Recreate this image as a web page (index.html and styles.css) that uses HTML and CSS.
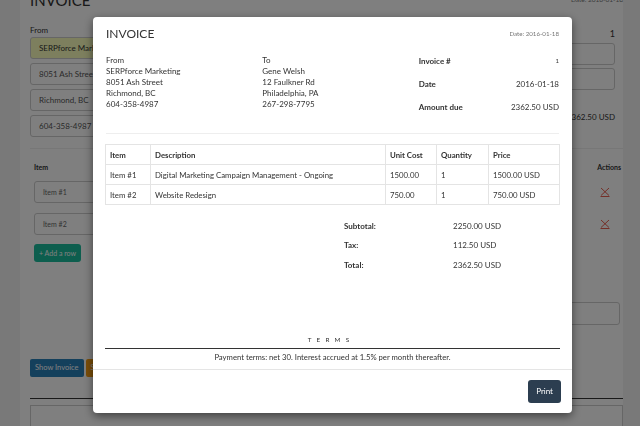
FILE: index.html
```html
<!DOCTYPE html>
<html>
<head>
<meta charset="utf-8">
<link rel="stylesheet" href="styles.css">
</head>
<body>
<div class="page">
  <div class="pg-head">
    <h1 class="pg-title">INVOICE</h1>
    <span class="pg-date">Date: 2016-01-18</span>
  </div>
  <div class="pg-info">
    <div class="pg-from">
      <div class="pg-lbl">From</div>
      <div class="inp autofill">SERPforce Marketing</div>
      <div class="inp">8051 Ash Street</div>
      <div class="inp">Richmond, BC</div>
      <div class="inp">604-358-4987</div>
    </div>
    <div class="pg-meta">
      <div class="pg-num">1</div>
      <div class="inp"></div>
      <div class="inp"></div>
      <div class="pg-amt">2362.50 USD</div>
    </div>
  </div>
  <div class="pg-hr"></div>
  <div class="pg-items">
    <div class="pg-items-head"><span>Item</span><span>Actions</span></div>
    <div class="pg-row">
      <div class="inp item">Item #1</div>
      <svg class="del" viewBox="0 0 10 10" width="10" height="10"><path d="M1 1L9 8.5M9 1L1 8.5M0.5 9.5H9.5" stroke="#e74c3c" stroke-width="0.9" fill="none"/></svg>
    </div>
    <div class="pg-row">
      <div class="inp item">Item #2</div>
      <svg class="del" viewBox="0 0 10 10" width="10" height="10"><path d="M1 1L9 8.5M9 1L1 8.5M0.5 9.5H9.5" stroke="#e74c3c" stroke-width="0.9" fill="none"/></svg>
    </div>
    <div class="btn-add">+ Add a row</div>
  </div>
  <div class="pg-notes"><div class="inp notes"></div></div>
  <div class="pg-actions">
    <div class="btn blue">Show Invoice</div>
    <div class="btn orange">Save Invoice</div>
  </div>
  <div class="pg-hr dark"></div>
  <div class="pg-box"></div>
</div>

<div class="overlay"></div>

<div class="modal">
  <div class="m-head">
    <h2 class="m-title">INVOICE</h2>
    <span class="m-date">Date: 2016-01-18</span>
  </div>
  <div class="m-body">
    <div class="m-info">
      <div class="m-addr">
        <div>From</div>
        <div>SERPforce Marketing</div>
        <div>8051 Ash Street</div>
        <div>Richmond, BC</div>
        <div>604-358-4987</div>
      </div>
      <div class="m-addr">
        <div>To</div>
        <div>Gene Welsh</div>
        <div>12 Faulkner Rd</div>
        <div>Philadelphia, PA</div>
        <div>267-298-7795</div>
      </div>
      <div class="m-meta">
        <div class="m-meta-row"><span class="b">Invoice #</span><span class="tiny">1</span></div>
        <div class="m-meta-row"><span class="b">Date</span><span>2016-01-18</span></div>
        <div class="m-meta-row"><span class="b">Amount due</span><span>2362.50 USD</span></div>
      </div>
    </div>
    <div class="m-hr"></div>
    <table class="m-table">
      <colgroup>
        <col class="c1"><col class="c2"><col class="c3"><col class="c4"><col class="c5">
      </colgroup>
      <thead>
        <tr><th>Item</th><th>Description</th><th>Unit Cost</th><th>Quantity</th><th>Price</th></tr>
      </thead>
      <tbody>
        <tr><td>Item #1</td><td>Digital Marketing Campaign Management - Ongoing</td><td>1500.00</td><td>1</td><td>1500.00 USD</td></tr>
        <tr><td>Item #2</td><td>Website Redesign</td><td>750.00</td><td>1</td><td>750.00 USD</td></tr>
      </tbody>
    </table>
    <div class="m-totals">
      <div class="m-tot-row"><span class="b">Subtotal:</span><span>2250.00 USD</span></div>
      <div class="m-tot-row"><span class="b">Tax:</span><span>112.50 USD</span></div>
      <div class="m-tot-row"><span class="b">Total:</span><span>2362.50 USD</span></div>
    </div>
    <div class="m-terms">
      <div class="m-terms-title">TERMS</div>
      <div class="m-terms-text">Payment terms: net 30. Interest accrued at 1.5% per month thereafter.</div>
    </div>
  </div>
  <div class="m-foot">
    <div class="btn-print">Print</div>
  </div>
</div>
</body>
</html>
```

FILE: styles.css
```css
* { box-sizing: border-box; }
html, body { margin: 0; padding: 0; height: 100%; overflow: hidden; }
body {
  background: #f2f2f2;
  font-family: Lato, "Open Sans", sans-serif;
  color: #333;
  font-size: 8px;
}

/* ---------- background page ---------- */
.page {
  margin: 0 17px 0 20px;
  background: #fff;
  min-height: 100%;
  padding: 0 0 0 10px;
}
.pg-head {
  display: flex;
  justify-content: space-between;
  align-items: flex-start;
  margin-top: -9px;
  height: 33px;
}
.pg-title { margin: 0; font-size: 15px; font-weight: 400; line-height: 18px; }
.pg-date { font-size: 6.5px; color: #777; margin-top: 5px; }
.pg-info { display: flex; justify-content: space-between; }
.pg-from { width: 200px; display: flex; flex-direction: column; gap: 4px; }
.pg-lbl { line-height: 10px; margin-bottom: -2px; margin-top: 1px; }
.inp {
  height: 22px;
  border: 1px solid #ccc;
  border-radius: 3px;
  padding: 0 8px;
  line-height: 20px;
  font-size: 8px;
  color: #555;
  background: #fff;
}
.autofill { background: #faffbd; color: #333; }
.pg-meta { width: 200px; display: flex; flex-direction: column; gap: 3px; margin-right: 8px; }
.pg-num { text-align: right; font-size: 9px; line-height: 12px; margin-top: 4px; height: 12px; }
.pg-meta .inp:first-of-type { margin-top: 2px; }
.pg-amt { text-align: right; font-size: 8px; line-height: 12px; margin-top: 18px; }
.pg-hr { height: 1px; background: #eee; margin-top: 11px; }
.pg-hr.dark { background: #333; margin-top: 21px; }
.pg-items { padding: 0 2px 0 4px; }
.pg-items-head {
  display: flex; justify-content: space-between;
  font-weight: 700; font-size: 7px; line-height: 10px;
  margin-top: 13px;
}
.pg-row { display: flex; justify-content: space-between; align-items: center; margin-top: 9px; }
.pg-row + .pg-row { margin-top: 10px; }
.inp.item { width: 200px; font-size: 7px; color: #666; }
.del { margin-right: 11px; }
.btn-add {
  display: inline-block;
  margin-top: 9px;
  background: #1abc9c;
  color: #fff;
  border-radius: 3px;
  height: 18px; line-height: 18px;
  padding: 0 5px;
  font-size: 7px;
}
.pg-notes { display: flex; justify-content: flex-end; margin-top: 40px; padding-right: 3px; }
.inp.notes { width: 200px; height: 23px; }
.pg-actions { display: flex; gap: 2px; margin-top: 34px; }
.btn {
  height: 18px; line-height: 18px;
  padding: 0 5px;
  color: #fff;
  border-radius: 2px;
  font-size: 7.5px;
}
.btn.blue { background: #2980b9; }
.btn.orange { background: #f39c12; }
.pg-box { height: 40px; border: 1px solid #ccc; margin-top: 6px; }

.overlay { position: fixed; inset: 0; background: rgba(0,0,0,0.5); }

/* ---------- modal ---------- */
.modal {
  position: fixed;
  left: 93px; top: 17px;
  width: 479px; height: 396px;
  background: #fff;
  border-radius: 4px;
  box-shadow: 0 3px 10px rgba(0,0,0,0.5);
  display: flex;
  flex-direction: column;
}
.m-head {
  height: 32px;
  padding: 0 13px;
  display: flex;
  justify-content: space-between;
  align-items: center;
}
.m-title { margin: 0; font-size: 12px; font-weight: 400; color: #333; }
.m-date { font-size: 6.2px; color: #777; }
.m-body { flex: 1; padding: 0 13px; display: flex; flex-direction: column; }
.m-info {
  display: grid;
  grid-template-columns: 1fr 1fr 1fr;
  column-gap: 16px;
  align-items: start;
}
.m-addr { padding-top: 6px; line-height: 11px; }
.m-meta-row {
  height: 23px;
  display: flex; justify-content: space-between; align-items: center;
}
.b { font-weight: 700; }
.tiny { font-size: 6px; }
.m-hr { height: 1px; background: #eee; margin-top: 15px; }
.m-table {
  margin-top: 10px;
  width: 454px;
  margin-left: -1px;
  border-collapse: collapse;
  table-layout: fixed;
}
.c1 { width: 45px; } .c2 { width: 235px; } .c3 { width: 51px; } .c4 { width: 52px; } .c5 { width: 71px; }
.m-table th, .m-table td {
  border: 1px solid #e4e4e4;
  height: 20px;
  padding: 0 4px;
  text-align: left;
  font-size: 7.8px;
  white-space: nowrap;
  overflow: hidden;
}
.m-table th { font-weight: 700; }
.m-totals { margin-top: 11px; padding-left: 238px; }
.m-tot-row { display: flex; height: 19.5px; align-items: center; }
.m-tot-row .b { width: 109px; }
.m-terms { margin-top: auto; padding-bottom: 6px; }
.m-terms-title {
  text-align: center;
  font-size: 6.3px;
  letter-spacing: 5.2px;
  padding-right: 3px;
  line-height: 10px;
  padding-bottom: 3px;
  border-bottom: 1px solid #333;
  margin: 0 -1px;
}
.m-terms-text { text-align: center; font-size: 7.7px; line-height: 11px; margin-top: 3px; }
.m-foot {
  border-top: 1px solid #e5e5e5;
  height: 44px;
  padding: 10px 11px 0;
  display: flex;
  justify-content: flex-end;
  align-items: flex-start;
}
.btn-print {
  background: #2c3e50;
  color: #fff;
  height: 23px; line-height: 23px;
  padding: 0 8px;
  border-radius: 3px;
  font-size: 8px;
}
```
